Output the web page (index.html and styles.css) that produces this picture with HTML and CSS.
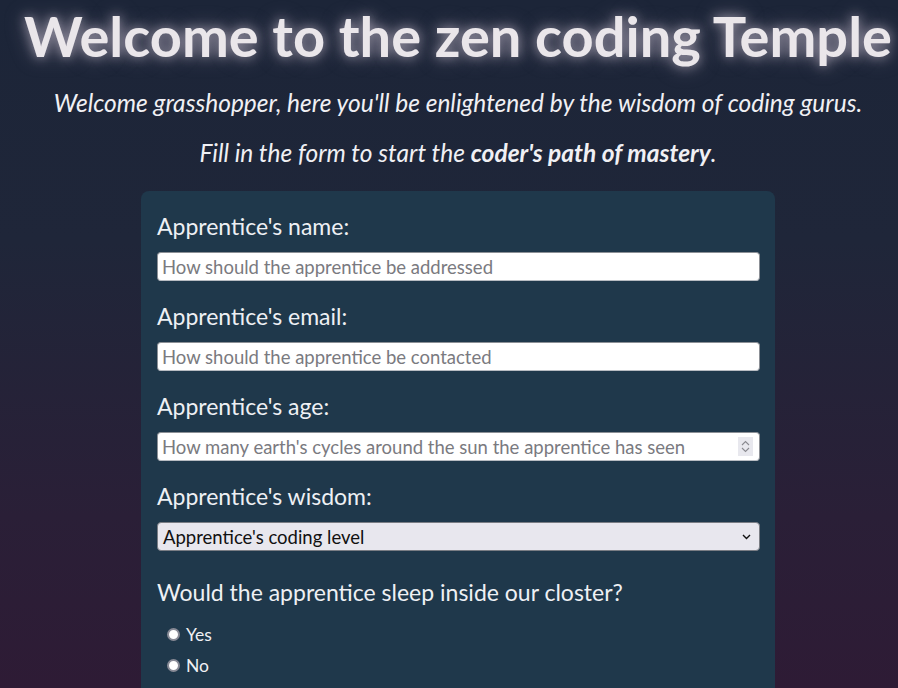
FILE: index.html
```html
<!DOCTYPE html>
<html lang="en">
<head>
<meta charset="utf-8">
<title>Zen coding Temple</title>
<link rel="stylesheet" href="styles.css">
</head>
<body>
<main class="page">
  <h1 class="title">Welcome to the zen coding Temple</h1>
  <p class="intro intro-first">Welcome grasshopper, here you'll be enlightened by the wisdom of coding gurus.</p>
  <p class="intro">Fill in the form to start the <strong>coder's path of mastery</strong>.</p>
  <form class="card">
    <div class="field">
      <label class="label" for="name">Apprentice's name:</label>
      <input class="input" id="name" type="text" placeholder="How should the apprentice be addressed">
    </div>
    <div class="field">
      <label class="label" for="email">Apprentice's email:</label>
      <input class="input" id="email" type="email" placeholder="How should the apprentice be contacted">
    </div>
    <div class="field">
      <label class="label" for="age">Apprentice's age:</label>
      <div class="number">
        <input class="input" id="age" type="text" placeholder="How many earth's cycles around the sun the apprentice has seen">
        <span class="spin"><svg width="9" height="13" viewBox="0 0 9 13"><path d="M1 5 L4.5 1.5 L8 5 M1 8 L4.5 11.5 L8 8" fill="none" stroke="#8a8a90" stroke-width="1.1"/></svg></span>
      </div>
    </div>
    <div class="field">
      <label class="label" for="level">Apprentice's wisdom:</label>
      <div class="select">
        <span>Apprentice's coding level</span>
        <svg width="9" height="6" viewBox="0 0 9 6"><path d="M1 1 L4.5 4.5 L8 1" fill="none" stroke="#111" stroke-width="1.4"/></svg>
      </div>
    </div>
    <div class="field">
      <p class="label question">Would the apprentice sleep inside our closter?</p>
      <label class="radio"><span class="dot"></span>Yes</label>
      <label class="radio"><span class="dot"></span>No</label>
    </div>
  </form>
</main>
</body>
</html>
```
FILE: styles.css
```css
html, body {
  margin: 0;
  height: 100%;
}
body {
  background: linear-gradient(180deg, #1c2538 0%, #1f2639 35%, #2a1f37 75%, #2e1b35 100%);
  font-family: Lato, "Open Sans", sans-serif;
  color: #ececf0;
  overflow: hidden;
}
.page {
  padding-left: 18px;
  display: flex;
  flex-direction: column;
  align-items: center;
}
.title {
  margin: 1px 0 0;
  font-size: 56px;
  font-weight: 700;
  line-height: 70px;
  color: #eae6ea;
  white-space: nowrap;
  text-shadow: 0 0 12px rgba(255, 240, 255, 0.55), 0 0 22px rgba(220, 200, 220, 0.35);
}
.intro {
  margin: 0 0 24px;
  font-style: italic;
  font-size: 24.5px;
  line-height: 28px;
  color: #f0f0f4;
  white-space: nowrap;
}
.intro-first {
  margin-top: 18px;
  margin-bottom: 22px;
}
.intro strong { font-weight: 700; }
.card {
  width: 603px;
  padding: 19px 15px 30px 16px;
  background: #1f384b;
  border-radius: 8px;
}
.field {
  display: flex;
  flex-direction: column;
  margin-bottom: 19px;
}
.label {
  margin: 0 0 10px;
  font-size: 23px;
  line-height: 32px;
  color: #eef0f4;
}
.input {
  box-sizing: border-box;
  width: 100%;
  height: 29px;
  border: 1px solid #8c9096;
  border-bottom-color: #b8bcc2;
  border-radius: 4px;
  background: #fff;
  padding: 0 4px;
  font-family: Lato, sans-serif;
  font-size: 18.5px;
  color: #222;
}
.input::placeholder { color: #7a7a80; }
.number { position: relative; }
.spin {
  position: absolute;
  right: 7px;
  top: 5px;
  width: 15px;
  height: 19px;
  background: #e8e8ee;
  display: flex;
  align-items: center;
  justify-content: center;
}
.select {
  box-sizing: border-box;
  height: 29px;
  border: 1px solid #7a7d84;
  border-radius: 4px;
  background: #e8e7ee;
  padding: 0 8px 0 5px;
  display: flex;
  align-items: center;
  justify-content: space-between;
  font-size: 18.5px;
  color: #111;
}
.question {
  margin-top: 6px;
  margin-bottom: 11px;
}
.radio {
  display: flex;
  align-items: center;
  gap: 6px;
  margin-left: 10px;
  font-size: 17.5px;
  line-height: 31px;
  color: #f0f0f4;
}
.dot {
  box-sizing: border-box;
  width: 13px;
  height: 13px;
  border-radius: 50%;
  background: #fff;
  border: 2px solid #888a96;
}
```
